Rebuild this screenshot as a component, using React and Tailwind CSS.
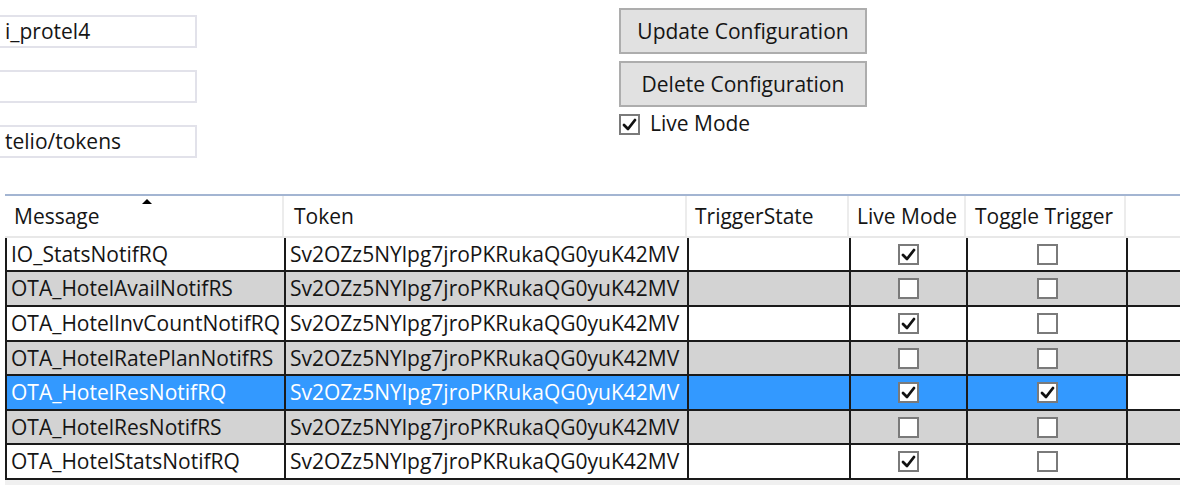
import React from 'react';

const rows = [
  { msg: 'IO_StatsNotifRQ', live: true, toggle: false, h: 'h-[34px]' },
  { msg: 'OTA_HotelAvailNotifRS', live: false, toggle: false, h: 'h-[35px]' },
  { msg: 'OTA_HotelInvCountNotifRQ', live: true, toggle: false, h: 'h-[35px]' },
  { msg: 'OTA_HotelRatePlanNotifRS', live: false, toggle: false, h: 'h-[34px]' },
  { msg: 'OTA_HotelResNotifRQ', live: true, toggle: true, h: 'h-[35px]', selected: true },
  { msg: 'OTA_HotelResNotifRS', live: false, toggle: false, h: 'h-[34px]' },
  { msg: 'OTA_HotelStatsNotifRQ', live: true, toggle: false, h: 'h-[35px]' },
];

const token = 'Sv2OZz5NYlpg7jroPKRukaQG0yuK42MV';

const cols = 'grid grid-cols-[279px_403px_162px_117px_160px_1fr]';

const CheckBox = ({ checked }) => (
  <div className="w-[21px] h-[21px] border-2 border-[#7a7a7a] bg-white flex items-center justify-center">
    {checked && (
      <svg width="15" height="13" viewBox="0 0 15 13">
        <path d="M2 7 L6 11 L13 2" fill="none" stroke="#111" strokeWidth="2.8" strokeLinecap="round" strokeLinejoin="round" />
      </svg>
    )}
  </div>
);

const TextBox = ({ value, top }) => (
  <div className={`h-[33px] w-[197px] border-2 border-[#e2e2ea] border-l-0 bg-white flex items-center pl-[5px] whitespace-nowrap overflow-hidden ${top}`}>
    {value}
  </div>
);

const App = () => {
  return (
    <div className="w-[1180px] h-[485px] bg-white overflow-hidden text-[21px] leading-none text-[#151515]" style={{ fontFamily: '"Open Sans", "Noto Sans", sans-serif' }}>
      {/* Top form area */}
      <div className="flex h-[194px]">
        <div className="w-[619px] flex flex-col">
          <TextBox value="i_protel4" top="mt-[15px]" />
          <TextBox value="" top="mt-[22px]" />
          <TextBox value="telio/tokens" top="mt-[22px]" />
        </div>
        <div className="flex flex-col pt-[8px]">
          <button className="w-[248px] h-[46px] bg-[#e1e1e1] border-2 border-[#adadad] text-[#151515]">
            Update Configuration
          </button>
          <button className="w-[248px] h-[46px] mt-[7px] bg-[#e1e1e1] border-2 border-[#adadad] text-[#151515]">
            Delete Configuration
          </button>
          <div className="flex items-center mt-[7px] gap-[10px]">
            <CheckBox checked />
            <span className="-mt-[2px]">Live Mode</span>
          </div>
        </div>
      </div>

      {/* Data grid */}
      <div className="ml-[5px] border-t-2 border-[#a3b5d2]">
        <div className={`${cols} h-[42px] border-b-2 border-[#e8e8e8]`}>
          <div className="relative flex items-center pl-[9px] border-r-2 border-[#ececec]">
            Message
            <div className="absolute top-[3px] left-[137px] w-0 h-0 border-l-[5px] border-r-[5px] border-b-[5px] border-l-transparent border-r-transparent border-b-black" />
          </div>
          <div className="flex items-center pl-[10px] border-r-2 border-[#ececec]">Token</div>
          <div className="flex items-center pl-[8px] border-r-2 border-[#ececec]">TriggerState</div>
          <div className="flex items-center pl-[8px] border-r-2 border-[#ececec]">Live Mode</div>
          <div className="flex items-center pl-[9px] border-r-2 border-[#ececec]">Toggle Trigger</div>
          <div />
        </div>

        <div className="border-l-2 border-[#1a1a1a]">
          {rows.map((r, i) => {
            const bg = r.selected ? 'bg-[#3399ff] text-white' : i % 2 === 1 ? 'bg-[#d3d3d3]' : 'bg-white';
            const filler = r.selected ? 'bg-white' : i % 2 === 1 ? 'bg-[#d3d3d3]' : 'bg-white';
            return (
              <div key={r.msg} className={`${cols} ${r.h} border-b-2 border-[#1a1a1a]`}>
                <div className={`${bg} flex items-center pl-[4px] border-r-2 border-[#1a1a1a] whitespace-nowrap overflow-hidden`}>{r.msg}</div>
                <div className={`${bg} flex items-center pl-[4px] border-r-2 border-[#1a1a1a] whitespace-nowrap overflow-hidden`}>{token}</div>
                <div className={`${bg} border-r-2 border-[#1a1a1a]`} />
                <div className={`${bg} flex items-center justify-center border-r-2 border-[#1a1a1a]`}>
                  <CheckBox checked={r.live} />
                </div>
                <div className={`${bg} flex items-center justify-center border-r-2 border-[#1a1a1a]`}>
                  <CheckBox checked={r.toggle} />
                </div>
                <div className={filler} />
              </div>
            );
          })}
        </div>
        <div className="h-[10px] bg-[#f0f0f0]" />
      </div>
    </div>
  );
};

export default App;
